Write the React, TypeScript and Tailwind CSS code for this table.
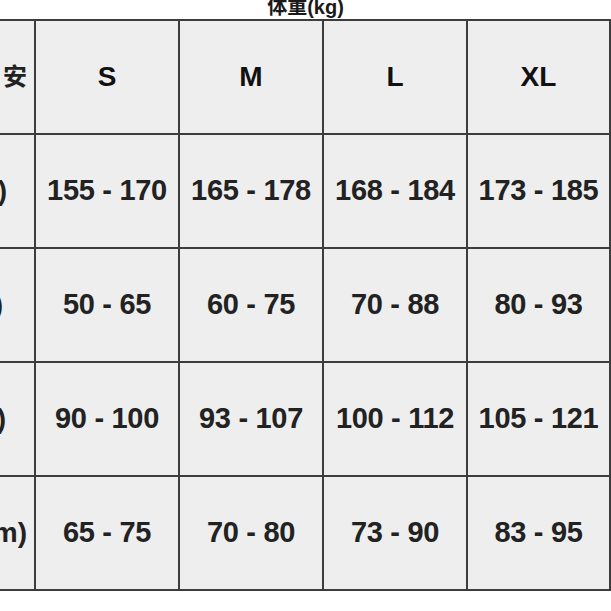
const sizes = ["S", "M", "L", "XL"]

const rows = [
  { label: "身高(cm)", pad: "pr-[27px]", values: ["155 - 170", "165 - 178", "168 - 184", "173 - 185"] },
  { label: "体重(kg)", pad: "pr-[31px]", values: ["50 - 65", "60 - 75", "70 - 88", "80 - 93"] },
  { label: "胸围(cm)", pad: "pr-[28px]", values: ["90 - 100", "93 - 107", "100 - 112", "105 - 121"] },
  { label: "衣长(cm)", pad: "pr-[7px]", values: ["65 - 75", "70 - 80", "73 - 90", "83 - 95"] },
]

const font = { fontFamily: '"Liberation Sans", Arial, "Noto Sans CJK SC", sans-serif' }

export default function App() {
  return (
    <div className="w-[611px] h-[611px] bg-white overflow-hidden" style={font}>
      {/* caption cut off at the top */}
      <div className="h-[19px] overflow-hidden flex items-end justify-center pb-[2px]">
        <span className="text-[20px] font-bold leading-none text-[#1a1a1a] whitespace-nowrap">体重(kg)</span>
      </div>

      {/* size table, first column runs off the left edge */}
      <div className="ml-[-109px] w-[720px] grid grid-cols-[143px_142px_142px_142px_141px] grid-rows-[112px_112px_112px_112px_112px] gap-[2px] bg-[#3c3c3c] pt-[2px] pb-[2px] pr-[2px]">
        <div className="bg-[#eeeeee] flex items-center justify-end pr-[7px] text-[24px] font-bold text-[#222] whitespace-nowrap">
          参考&nbsp;&nbsp;安
        </div>
        {sizes.map((s) => (
          <div key={s} className="bg-[#eeeeee] flex items-center justify-center text-[28px] font-bold text-[#111]">
            {s}
          </div>
        ))}

        {rows.map((row) => (
          <>
            <div
              key={row.label}
              className={`bg-[#eeeeee] flex items-center justify-end ${row.pad} text-[28px] font-bold text-[#222] whitespace-nowrap overflow-hidden`}
            >
              {row.label}
            </div>
            {row.values.map((v, i) => (
              <div
                key={row.label + i}
                className="bg-[#eeeeee] flex items-center justify-center text-[29px] font-bold text-[#222] whitespace-nowrap tracking-[-0.3px]"
              >
                {v}
              </div>
            ))}
          </>
        ))}
      </div>
    </div>
  )
}
